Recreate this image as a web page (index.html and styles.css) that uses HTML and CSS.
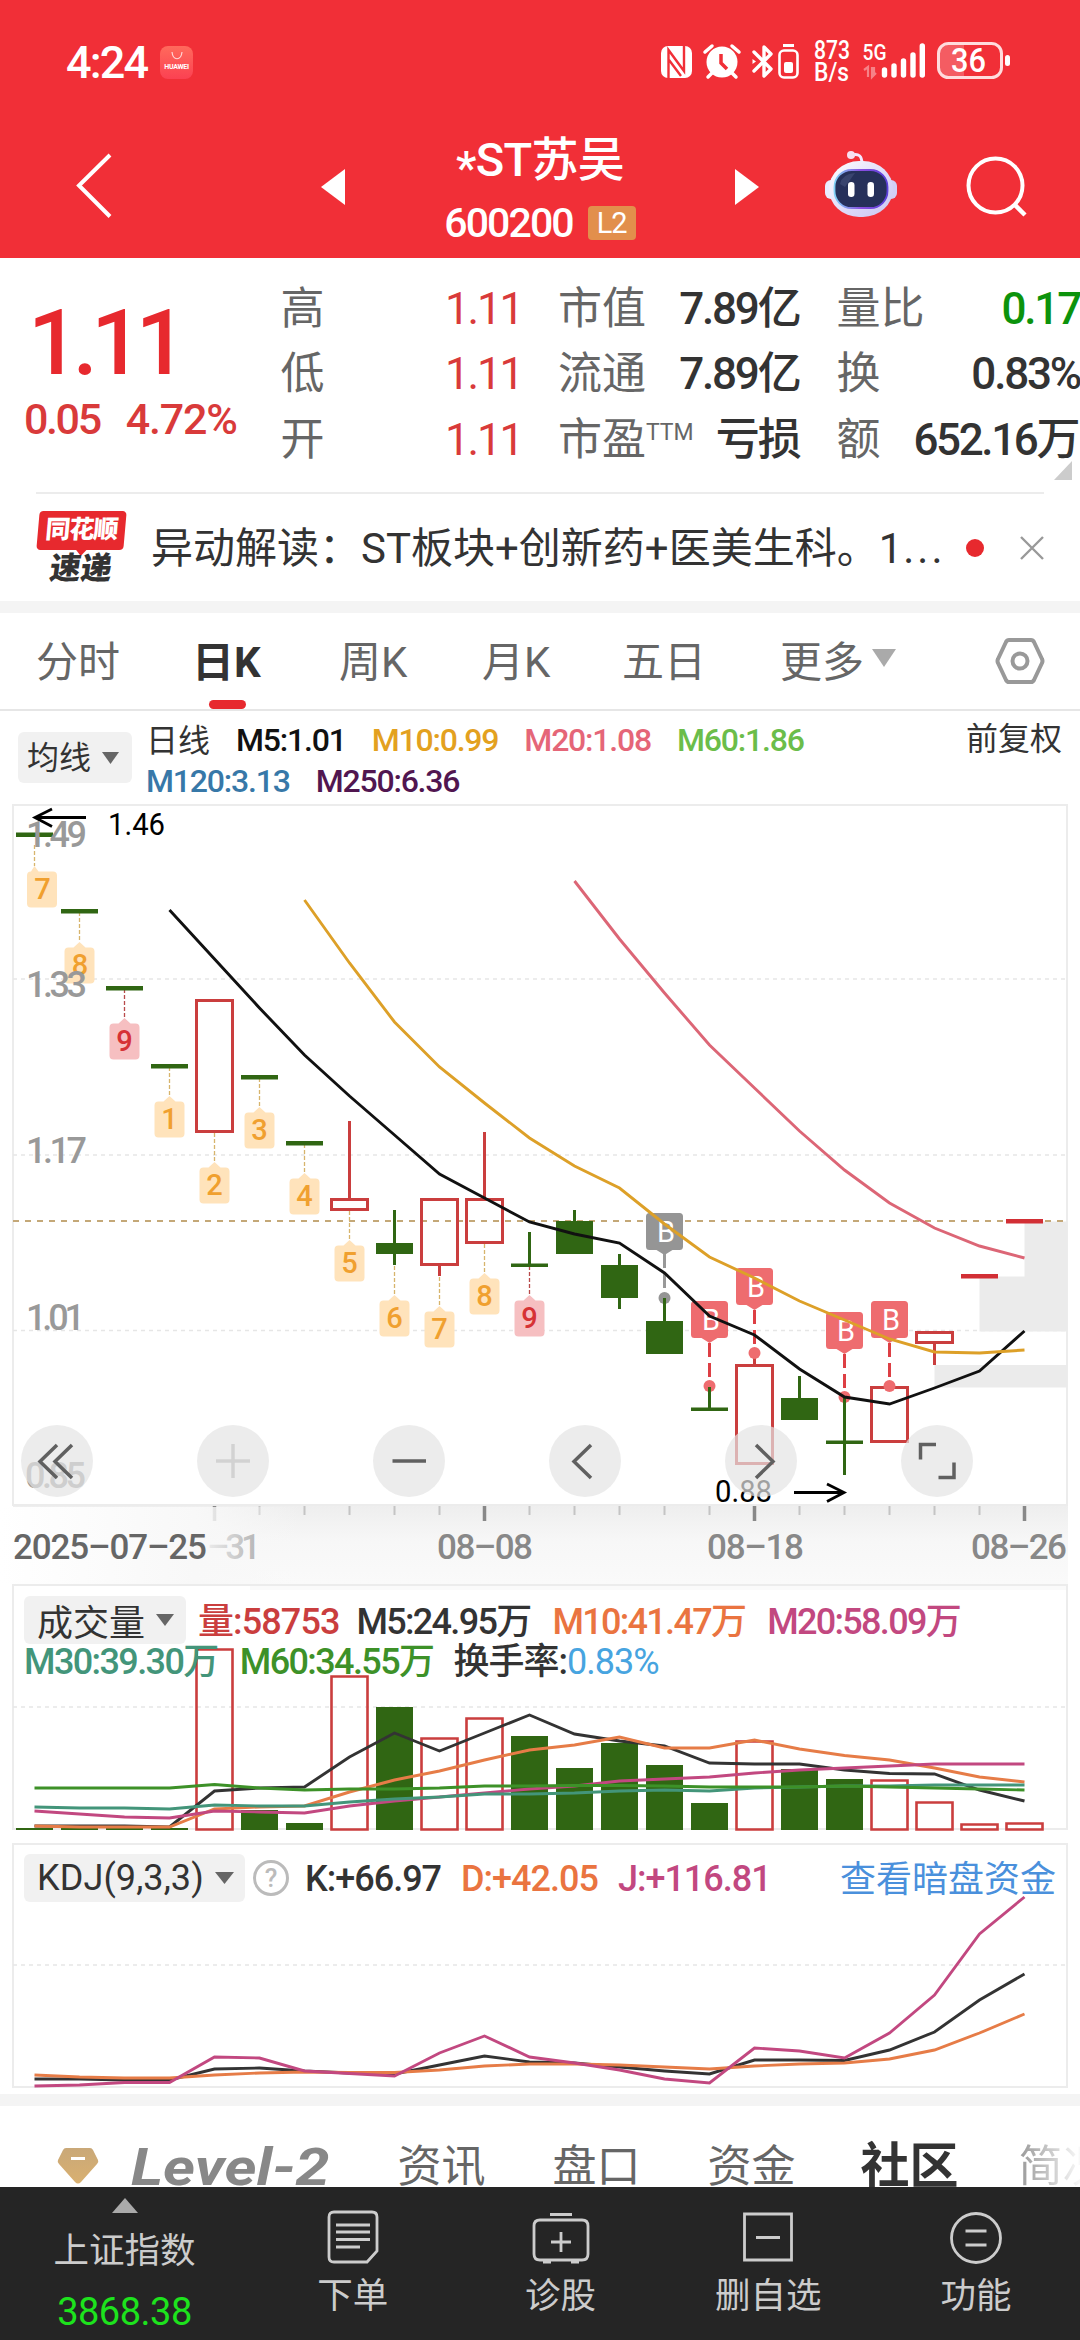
FILE: index.html
```html
<!DOCTYPE html>
<html lang="zh-CN">
<head>
<meta charset="utf-8">
<title>*ST苏吴 600200</title>
<link rel="stylesheet" href="styles.css">
</head>
<body>
<div class="page">
  <header class="top">
    <div class="status">
      <span class="clock">4:24</span>
      <span class="app-badge">
        <svg width="18" height="10" viewBox="0 0 18 10"><path d="M4 1c1 9 9 9 10 0" fill="none" stroke="#ffd5d5" stroke-width="1.2"/></svg>
        <b>HUAWEI</b>
      </span>
      <svg class="status-icons" width="350" height="44" viewBox="659 40 350 44">
        <rect x="660" y="46" width="31" height="32" rx="7" fill="#fff"/>
        <path d="M667.500 79V50l15.500 21V45M668 60l12 16" fill="none" stroke="#f12f37" stroke-width="2.400"/>
        <circle cx="721" cy="62" r="15.5" fill="#fff"/>
        <path d="M704 52l7-6M738 52l-7-6M711 73l-4 4M731 73l4 4" stroke="#fff" stroke-width="3.5" stroke-linecap="round"/>
        <path d="M720 54v9l6 6" fill="none" stroke="#f12f37" stroke-width="3.5"/>
        <path d="M753 52l17 17-7 7V47l7 7-17 17" fill="none" stroke="#fff" stroke-width="3.4" stroke-linejoin="round" stroke-linecap="round"/>
        <path d="M751.500 59l3.500 2.500-3.500 2.500z" fill="#fff"/>
        <rect x="778.5" y="50.500" width="18" height="27" rx="4.500" fill="none" stroke="#fff" stroke-width="2.6"/>
        <path d="M782 45.500h11" stroke="#fff" stroke-width="3"/><rect x="783" y="62" width="9" height="11" rx="2" fill="#fff"/>
        <text class="net" x="813" y="59" textLength="36" lengthAdjust="spacingAndGlyphs">873</text>
        <text class="net" x="813" y="81" textLength="35" lengthAdjust="spacingAndGlyphs">B/s</text>
        <text class="net five" x="861.500" y="60" textLength="24" lengthAdjust="spacingAndGlyphs">5G</text>
        <path d="M863 70l4-3v10M871 67v10l4-4M873 67v8" fill="none" stroke="#fff" stroke-opacity=".4" stroke-width="2.200"/>
        <path d="M883.500 70v5M893 66v9M902.500 61v14M912 55v20M921.300 46v29" stroke="#fff" stroke-width="5.400" stroke-linecap="round"/>
        <path d="M963 44h-15q-10 0-10 10v14q0 10 10 10h15z" fill="#fff" fill-opacity=".22"/>
        <rect x="937.500" y="43.500" width="63" height="34" rx="10" fill="none" stroke="#ffdcdd" stroke-width="3"/>
        <rect x="1004" y="55" width="5" height="11" rx="2.500" fill="#fff"/>
        <text class="pct" x="950" y="72" textLength="35" lengthAdjust="spacingAndGlyphs">36</text>
      </svg>
    </div>
    <nav class="nav">
      <svg class="back" width="38" height="66" viewBox="75 151 38 66"><path d="M110 154L79 184.500l31 31" fill="none" stroke="#fff" stroke-width="4"/></svg>
      <svg class="prev" width="24" height="36" viewBox="0 0 24 36"><path d="M24 0v36L0 18z" fill="#fff"/></svg>
      <div class="title">
        <h1><i>*</i>ST苏吴</h1>
        <p><span>600200</span><em>L2</em></p>
      </div>
      <svg class="next" width="24" height="36" viewBox="0 0 24 36"><path d="M0 0v36l24-18z" fill="#fff"/></svg>
      <svg class="robot" width="74" height="68" viewBox="824 150 74 68">
        <defs>
          <linearGradient id="shell" x1="0" y1="0" x2="1" y2="1"><stop offset="0" stop-color="#fff"/><stop offset=".6" stop-color="#dcd8f8"/><stop offset="1" stop-color="#c9c6f0"/></linearGradient>
          <linearGradient id="rim" x1="0" y1="0" x2="1" y2="0"><stop offset="0" stop-color="#7fd0f5"/><stop offset=".5" stop-color="#8a4fe0"/><stop offset="1" stop-color="#5a3fd8"/></linearGradient>
        </defs>
        <path d="M852 155q10-3 10 9" fill="none" stroke="#f4e8ff" stroke-width="3"/>
        <circle cx="851" cy="155" r="4" fill="#f8dff0"/>
        <rect x="825" y="180" width="12" height="19" rx="6" fill="#e9ecff"/><rect x="885" y="180" width="12" height="19" rx="6" fill="#d2cff5"/>
        <rect x="829" y="161" width="64" height="56" rx="30" fill="url(#shell)"/>
        <rect x="834.500" y="170" width="53" height="38" rx="17" fill="#26305a" stroke="url(#rim)" stroke-width="1.800"/>
        <path d="M840 184q2-10 15-11l-10 14z" fill="#46527c" opacity=".6"/>
        <rect x="848" y="182" width="6.500" height="15" rx="3.200" fill="#fff"/><rect x="867.500" y="182" width="6.500" height="15" rx="3.200" fill="#fff"/>
      </svg>
      <svg class="search" width="62" height="62" viewBox="964 156 62 62"><circle cx="994.500" cy="185.500" r="27" fill="none" stroke="#fff" stroke-width="4"/><path d="M1013 204l11 11" stroke="#fff" stroke-width="4.500"/></svg>
    </nav>
  </header>

  <section class="quote">
    <div class="price"><strong>1.11</strong><p><span>0.05</span><span class="pc">4.72%</span></p></div>
    <dl class="q1"><div><dt>高</dt><dd class="up">1.11</dd></div><div><dt>低</dt><dd class="up">1.11</dd></div><div><dt>开</dt><dd class="up">1.11</dd></div></dl>
    <dl class="q2"><div><dt>市值</dt><dd>7.89亿</dd></div><div><dt>流通</dt><dd>7.89亿</dd></div><div><dt>市盈<sup>TTM</sup></dt><dd>亏损</dd></div></dl>
    <dl class="q3"><div><dt>量比</dt><dd class="down">0.17</dd></div><div><dt>换</dt><dd>0.83%</dd></div><div><dt>额</dt><dd class="wan">652.16万</dd></div></dl>
    <i class="corner"></i>
  </section>

  <section class="news">
    <div class="brand"><span class="brand-top">同花顺</span><span class="brand-bottom">速递</span></div>
    <p>异动解读：ST板块+创新药+医美生科。1<span class="dots">...</span></p>
    <i class="dot"></i>
    <svg width="24" height="24" viewBox="0 0 24 24"><path d="M1 1l22 22M23 1L1 23" stroke="#999" stroke-width="2.400"/></svg>
  </section>

  <nav class="periods">
    <span>分时</span><span class="on">日K</span><span>周K</span><span>月K</span><span>五日</span>
    <span class="more">更多<svg width="24" height="18" viewBox="0 0 24 18"><path d="M0 0h24L12 18z" fill="#aaa"/></svg></span>
    <svg class="gear" width="50" height="48" viewBox="0 0 50 48"><path d="M14 3h22q2 0 3 2l8 17q1 2 0 4l-8 17q-1 2-3 2H14q-2 0-3-2L3 26q-1-2 0-4l8-17q1-2 3-2z" fill="none" stroke="#999" stroke-width="4"/><circle cx="25" cy="24" r="7.500" fill="none" stroke="#999" stroke-width="4"/></svg>
  </nav>

  <section class="ma">
    <span class="pill">均线<svg width="17" height="12" viewBox="0 0 17 12"><path d="M0 0h17L8.500 12z" fill="#666"/></svg></span>
    <div class="legend">
      <p><span class="cn">日线</span><span class="c5">M5:1.01</span><span class="c10">M10:0.99</span><span class="c20">M20:1.08</span><span class="c60">M60:1.86</span></p>
      <p><span class="c120">M120:3.13</span><span class="c250">M250:6.36</span></p>
    </div>
    <span class="adjust">前复权</span>
  </section>

  <svg class="kline" width="1080" height="780" viewBox="0 804 1080 780">
    <defs>
      <path id="flag" d="M0 0l6 5.500h5q4 0 4 4V37.500q0 4-4 4h-22q-4 0-4-4V9.500q0-4 4-4h5z"/>
      <path id="tag" d="M-15 0h30q3.500 0 3.500 3.500v30q0 3.500-3.500 3.500H8L0 42l-8-5h-7q-3.500 0-3.500-3.500v-30Q-18.500 0-15 0z"/>
      <linearGradient id="shade" x1="0" y1="0" x2="0" y2="1"><stop offset="0" stop-color="#eeeeee"/><stop offset=".45" stop-color="#f7f7f7"/><stop offset="1" stop-color="#fafafa"/></linearGradient>
      <linearGradient id="fade" x1="0" y1="0" x2="1" y2="0"><stop offset="0" stop-color="#fff"/><stop offset=".65" stop-color="#f8f8f8"/><stop offset="1" stop-color="#f8f8f8" stop-opacity="0"/></linearGradient>
    </defs>
    <rect x="13" y="1506" width="1055" height="78" fill="url(#shade)"/>
    <path class="frame" d="M13 1506V805h1054v700H13"/>
    <path class="grid" d="M13 979h1054M13 1155h1054M13 1330.500h1054"/>
    <path d="M1024.500 1221.500H1067v55h-42.500zM979.500 1276.500H1067v55h-87.500zM934.500 1365H1067v22.500H934.500z" fill="#ebebeb"/>
    <path d="M13 1221h1054" stroke="#c4a878" stroke-width="2" stroke-dasharray="6 6" fill="none"/>

    <g class="leader"><path d="M34.500 845v21M79.500 912v30M169.500 1067v29M214.500 1133v29M259.500 1078v29M304.500 1144v29M349.500 1211v29M394.500 1266v29M439.500 1277v29M484.500 1244v29"/><path class="hot" d="M124.500 989v29M529.500 1266v29"/></g>

    <path class="fall" d="M16 832.500h37v4.500H16zM61 909h37v4.500H61zM106 986h37v4.500h-37zM151 1064h37v4.500h-37zM241 1075h37v4.500h-37zM286 1141h37v4.500h-37z
      M376 1243h37v11h-37zM511 1263.500h37v3.500h-37zM556 1221h37v33h-37zM601 1265h37v33h-37zM646 1321h37v33h-37zM691 1407.500h37v3.500h-37zM781 1398h37v22h-37zM826 1440.500h37v3.500h-37z
      M393 1210h3v55h-3zM528 1232h3v33h-3zM573 1210h3v12h-3zM618 1254h3v55h-3zM798 1376h3v23h-3z"/>
    <path class="rise" d="M196.500 1000.500h36v131h-36zM331.500 1199.500h36v10h-36zM421.500 1199.500h36v65h-36zM466.500 1199.500h36v43h-36zM736.500 1365.500h36v98h-36zM871.500 1387.500h36v54h-36zM916.500 1332.500h36v10h-36z"/>
    <path class="rise" d="M349.500 1121v78M439.500 1266v10M484.500 1132v67M754.500 1354v11M934.500 1344v21"/>
    <path d="M961 1274h37v4.500h-37zM1006 1219h37v4.500h-37z" fill="#d22f35"/>

    <g class="tags grey"><use href="#tag" x="664.500" y="1213"/><path d="M664.500 1254v38" stroke="#999" stroke-width="3" stroke-dasharray="14 6"/><circle cx="664.500" cy="1298" r="6"/></g>
    <g class="tags"><use href="#tag" x="709.500" y="1301"/><use href="#tag" x="754.500" y="1268"/><use href="#tag" x="844.500" y="1312"/><use href="#tag" x="889.500" y="1301"/>
      <circle cx="709.500" cy="1386" r="6"/><circle cx="754.500" cy="1353" r="6"/><circle cx="844.500" cy="1397" r="6"/><circle cx="889.500" cy="1386" r="6"/>
      <path d="M709.500 1343v38M754.500 1310v38M844.500 1354v38M889.500 1343v38" stroke="#dd3f44" stroke-width="3" stroke-dasharray="14 6"/></g>
    <path class="fall" d="M663 1298h3v24h-3zM708 1387h3v22h-3zM843 1397h3v78h-3z"/>
    <g class="b"><text x="666" y="1242">B</text><text x="711" y="1330">B</text><text x="756" y="1297">B</text><text x="846" y="1341">B</text><text x="891" y="1330">B</text></g>

    <g class="flags">
      <use href="#flag" x="79.500" y="942"/><use href="#flag" x="169.500" y="1096"/><use href="#flag" x="214.500" y="1162"/><use href="#flag" x="259.500" y="1107"/><use href="#flag" x="304.500" y="1173"/><use href="#flag" x="349.500" y="1240"/><use href="#flag" x="394.500" y="1295"/><use href="#flag" x="439.500" y="1306"/><use href="#flag" x="484.500" y="1273"/>
      <path d="M34.500 866l4 5.500H53q4 0 4 4V903.500q0 4-4 4H31q-4 0-4-4V875.500q0-4 4-4z"/>
      <g class="num"><text x="42.500" y="899">7</text><text x="80" y="975">8</text><text x="169.500" y="1129">1</text><text x="214.500" y="1195">2</text><text x="259.500" y="1140">3</text><text x="304.500" y="1206">4</text><text x="349.500" y="1273">5</text><text x="394.500" y="1328">6</text><text x="439.500" y="1339">7</text><text x="484.500" y="1306">8</text></g>
      <g class="nine"><use href="#flag" x="124.500" y="1018"/><use href="#flag" x="529.500" y="1295"/></g>
      <g class="num nine-num"><text x="124.500" y="1051">9</text><text x="529.500" y="1328">9</text></g>
    </g>

    <polyline class="line" stroke="#111" points="169.500,910 214.500,959 259.500,1008 304.500,1055 349.500,1096 394.500,1135 439.500,1174 484.500,1198 529.500,1222 574.500,1234 619.500,1243 664.500,1273 709.500,1316 754.500,1335 799.500,1369 844.500,1397 889.500,1404 934.500,1388 979.500,1371 1024.500,1331"/>
    <polyline class="line" stroke="#dda028" points="304.500,900 349.500,963 394.500,1022 439.500,1067 484.500,1103 529.500,1138 574.500,1166 619.500,1188 664.500,1224 709.500,1257 754.500,1278 799.500,1301 844.500,1320 889.500,1339 934.500,1352 979.500,1353 1024.500,1350"/>
    <polyline class="line" stroke="#dc6676" points="574.500,881 619.500,939 664.500,993 709.500,1045 754.500,1088 799.500,1131 844.500,1170 889.500,1203 934.500,1228 979.500,1246 1024.500,1258"/>

    <path class="arrow" d="M86 817.500H36M52 809l-17 8.500 17 9M794 1492.500h50M827 1484l17 8.500-17 9"/>
    <text class="mark" x="108" y="835" textLength="57" lengthAdjust="spacingAndGlyphs">1.46</text>
    <text class="mark" x="715" y="1502" textLength="57" lengthAdjust="spacingAndGlyphs">0.88</text>
    <g class="axis">
      <text x="26" y="847" textLength="61">1.49</text><text x="26" y="997" textLength="61">1.33</text><text x="26" y="1163" textLength="61">1.17</text><text x="26" y="1330" textLength="59">1.01</text><text x="25" y="1488" textLength="61">0.85</text>
    </g>

    <path d="M259.500 1506v9M304.500 1506v9M349.500 1506v9M394.500 1506v9M439.500 1506v9M529.500 1506v9M574.500 1506v9M619.500 1506v9M664.500 1506v9M709.500 1506v9M799.500 1506v9M844.500 1506v9M889.500 1506v9M934.500 1506v9M979.500 1506v9" stroke="#c4c4c4" stroke-width="2"/>
    <path d="M214.500 1506v15M484.500 1506v15M754.500 1506v15M1024.500 1506v15" stroke="#888" stroke-width="3.500"/>
    <g class="dates">
      <text x="207" y="1559" textLength="54">–31</text><text x="437" y="1559" textLength="96">08–08</text><text x="707" y="1559" textLength="97">08–18</text><text x="971" y="1559" textLength="96">08–26</text>
      <rect x="0" y="1507" width="300" height="77" fill="url(#fade)"/>
      <text class="first" x="13" y="1559" textLength="194">2025–07–25</text>
    </g>

    <g class="controls">
      <circle cx="57" cy="1461" r="36"/><circle cx="233" cy="1461" r="36"/><circle cx="409" cy="1461" r="36"/><circle cx="585" cy="1461" r="36"/><circle cx="761" cy="1461" r="36"/><circle cx="937" cy="1461" r="36"/>
      <path d="M57 1445l-17 16.500 17 16.500M72 1445l-17 16.500 17 16.500M392.500 1461h33.500M591 1445l-17 16.500 17 16.500M756 1445l17 16.500-17 16.500M936 1444.500h-15.500v15M938.500 1477.500H954v-15"/>
      <path class="off" d="M216 1461h34M233 1444v34"/>
    </g>
  </svg>

  <section class="panel volume">
    <svg class="plot" width="1080" height="259" viewBox="0 1584 1080 259">
      <path d="M250 1584h817v6H250z" fill="#fafafa"/>
      <path class="frame" d="M13 1585h1054v244H13z"/>
      <path class="grid" d="M13 1707h1054"/>
      <path class="fall" d="M16 1828h37v2H16zM61 1828h37v2H61zM106 1828h37v2h-37zM151 1828h37v2h-37zM241 1810h37v20h-37zM286 1823h37v7h-37zM376 1707h37v123h-37zM511 1736h37v94h-37zM556 1768h37v62h-37zM601 1743h37v87h-37zM646 1765h37v65h-37zM691 1803h37v27h-37zM781 1769h37v61h-37zM826 1779h37v51h-37z"/>
      <path class="rise thin" d="M196.500 1649.500h36v180h-36zM331.500 1676.500h36v153h-36zM421.500 1738.500h36v91h-36zM466.500 1718.500h36v111h-36zM736.500 1741.500h36v88h-36zM871.500 1780.500h36v49h-36zM916.500 1802.500h36v27h-36zM961.500 1824.500h36v5h-36zM1006.500 1823.500h36v6h-36z"/>
      <polyline class="line" stroke="#333" points="34.500,1826 79.500,1826 124.500,1826 169.500,1827 214.500,1791 259.500,1788 304.500,1787 349.500,1757 394.500,1733 439.500,1751 484.500,1733 529.500,1715 574.500,1734 619.500,1741 664.500,1746 709.500,1763 754.500,1764 799.500,1764 844.500,1770 889.500,1773.500 934.500,1774 979.500,1790 1024.500,1801"/>
      <polyline class="line" stroke="#e67c47" points="34.500,1826 79.500,1827 124.500,1827 169.500,1827 214.500,1809 259.500,1807 304.500,1806 349.500,1792 394.500,1780 439.500,1771 484.500,1760 529.500,1750 574.500,1745 619.500,1737 664.500,1748 709.500,1748 754.500,1740 799.500,1749 844.500,1755.500 889.500,1760 934.500,1768 979.500,1777 1024.500,1782"/>
      <polyline class="line" stroke="#c24880" points="34.500,1811 79.500,1814 124.500,1817 169.500,1818 214.500,1811 259.500,1812 304.500,1813 349.500,1806 394.500,1801 439.500,1797 484.500,1793 529.500,1789 574.500,1786 619.500,1781 664.500,1779 709.500,1777 754.500,1773 799.500,1770 844.500,1768 889.500,1766 934.500,1764 979.500,1764 1024.500,1764"/>
      <polyline class="line" stroke="#43957a" points="34.500,1807 79.500,1808 124.500,1808 169.500,1809 214.500,1805 259.500,1806 304.500,1806 349.500,1802 394.500,1799 439.500,1797 484.500,1794 529.500,1794 574.500,1793 619.500,1791 664.500,1790 709.500,1791 754.500,1788 799.500,1787 844.500,1786 889.500,1786 934.500,1785 979.500,1785 1024.500,1785"/>
      <polyline class="line" stroke="#3d9128" points="34.500,1788 79.500,1788 124.500,1788 169.500,1788 214.500,1784.500 259.500,1788 304.500,1790 349.500,1789 394.500,1789 439.500,1788 484.500,1786 529.500,1786 574.500,1785.500 619.500,1785.500 664.500,1786 709.500,1787 754.500,1787 799.500,1787 844.500,1786 889.500,1787 934.500,1788 979.500,1789 1024.500,1790"/>
    </svg>
    <div class="row first-row">
      <span class="pill">成交量<svg width="18" height="12" viewBox="0 0 18 12"><path d="M0 0h18L9 12z" fill="#666"/></svg></span>
      <span class="v-red">量:58753</span><span class="v5">M5:24.95万</span><span class="v10">M10:41.47万</span><span class="v20">M20:58.09万</span>
    </div>
    <div class="row second-row"><span class="v30">M30:39.30万</span><span class="v60">M60:34.55万</span><span class="hs">换手率:<b>0.83%</b></span></div>
  </section>

  <section class="panel kdj">
    <svg class="plot" width="1080" height="251" viewBox="0 1843 1080 251">
      <path class="frame" d="M13 1844h1054v243H13z"/>
      <path class="grid" d="M13 1965h1054"/>
      <polyline class="line" stroke="#333" points="34.500,2079 79.500,2079 124.500,2080 169.500,2080 214.500,2069 259.500,2068 304.500,2071 349.500,2073 394.500,2074 439.500,2065 484.500,2056 529.500,2062 574.500,2063 619.500,2067 664.500,2071 709.500,2074 754.500,2060 799.500,2060 844.500,2060.500 889.500,2050 934.500,2032 979.500,2000 1024.500,1974"/>
      <polyline class="line" stroke="#e67c47" points="34.500,2075 79.500,2077 124.500,2078 169.500,2078 214.500,2075 259.500,2073 304.500,2072 349.500,2072.500 394.500,2072.500 439.500,2070 484.500,2066 529.500,2064 574.500,2064 619.500,2065 664.500,2067 709.500,2069 754.500,2066 799.500,2064 844.500,2063 889.500,2059 934.500,2050 979.500,2033 1024.500,2014"/>
      <polyline class="line" stroke="#c24880" points="34.500,2086 79.500,2085 124.500,2082.500 169.500,2082.500 214.500,2057 259.500,2058 304.500,2071 349.500,2073.500 394.500,2076 439.500,2053 484.500,2036 529.500,2057 574.500,2063 619.500,2070 664.500,2079 709.500,2083 754.500,2048 799.500,2051 844.500,2058 889.500,2033 934.500,1995 979.500,1934 1024.500,1897"/>
    </svg>
    <div class="row">
      <span class="pill">KDJ(9,3,3)<svg width="19" height="12" viewBox="0 0 19 12"><path d="M0 0h19L9.500 12z" fill="#666"/></svg></span>
      <span class="help">?</span>
      <span class="k">K:+66.97</span><span class="d">D:+42.05</span><span class="j">J:+116.81</span>
      <a>查看暗盘资金</a>
    </div>
  </section>

  <nav class="sections">
    <svg width="42" height="38" viewBox="0 0 42 38"><defs><linearGradient id="gem" x1="0" y1="0" x2="0" y2="1"><stop offset="0" stop-color="#c9a878"/><stop offset="1" stop-color="#d9b070"/></linearGradient></defs><path d="M9 1h24q2 0 3 2l5 10q1 2-1 4L24 35q-3 3-6 0L2 17q-2-2-1-4L6 3q1-2 3-2z" fill="url(#gem)"/><path d="M14 11.500h14" stroke="#fff" stroke-width="3"/></svg>
    <span class="level">Level-2</span><span>资讯</span><span>盘口</span><span>资金</span><span class="on">社区</span><span class="cut">简况</span>
  </nav>

  <footer class="bottom">
    <div class="index">
      <svg width="26" height="15" viewBox="0 0 26 15"><path d="M13 0l13 15H0z" fill="#aaa"/></svg>
      <span>上证指数</span><b>3868.38</b>
    </div>
    <div class="act"><svg width="60" height="56" viewBox="0 0 60 56"><path d="M11 3h38q5 0 5 5v34L44 53H11q-5 0-5-5V8q0-5 5-5zM13 16h34M13 23h34M13 30.500h34M13 38h24"/></svg><span>下单</span></div>
    <div class="act"><svg width="60" height="56" viewBox="0 0 60 56"><path d="M9 11h42q6 0 6 6v28q0 6-6 6H9q-6 0-6-6V17q0-6 6-6zM19 5.500h22M30 23v20M20 33h20M12 53h8M40 53h8"/></svg><span>诊股</span></div>
    <div class="act"><svg width="60" height="56" viewBox="0 0 60 56"><path d="M6.500 5h47v46h-47zM18 28.500h24"/></svg><span>删自选</span></div>
    <div class="act"><svg width="60" height="56" viewBox="0 0 60 56"><circle cx="30" cy="29" r="24.500"/><path d="M19.500 22h21M19.500 36h21"/></svg><span>功能</span></div>
  </footer>
</div>
</body>
</html>
```
FILE: styles.css
```css
* { box-sizing: border-box; margin: 0; padding: 0; }
body { width: 1080px; background: #fff; font-family: Roboto, "Noto Sans CJK SC", sans-serif; color: #333; }
i, em { font-style: normal; }
svg { display: block; flex: none; }
span, p, dt, dd, h1, b, a { white-space: nowrap; }
.page { width: 1080px; height: 2340px; overflow: hidden; display: flex; flex-direction: column; }
.page > * { flex: none; }

.top { height: 258px; background: #f12f37; color: #fff; }
.status { height: 124px; padding: 0 70px 0 66px; display: flex; align-items: center; }
.clock { font-size: 45px; font-weight: 500; letter-spacing: -1.800px; width: 94px; }
.app-badge { width: 33px; height: 33px; border-radius: 8px; background: linear-gradient(#ff6a5c, #fb4152); display: flex; flex-direction: column; align-items: center; padding-top: 5px; gap: 2px; }
.app-badge b { font-size: 7px; line-height: 8px; letter-spacing: -.3px; }
.status-icons { margin-left: auto; overflow: visible; }
.net { font-size: 25px; font-weight: 500; fill: #fff; }
.five { font-size: 22px; }
.pct { font-size: 33px; font-weight: 500; fill: #fff; }
.nav { height: 134px; display: flex; align-items: center; }
.back { margin: -13px 0 0 75px; }
.prev { margin: -8px 0 0 208px; }
.next { margin: -8px 0 0 0; }
.title { width: 390px; display: flex; flex-direction: column; align-items: center; padding-top: 1px; }
.title h1 { font-size: 47px; line-height: 62px; font-weight: 500; letter-spacing: -.7px; display: flex; height: 62px; }
.title h1 i { font-size: 46px; padding-top: 8px; }
.title p { display: flex; align-items: center; gap: 15px; height: 63px; }
.title p span { font-size: 41px; font-weight: 500; letter-spacing: -1.900px; }
.title em { width: 48px; height: 34px; border-radius: 4px; background: #e28f4c; font-size: 29px; line-height: 34px; text-align: center; letter-spacing: -1px; }
.robot { margin: -14px 0 0 65px; }
.search { margin: -9px 0 0 67px; }

.quote { height: 236px; position: relative; display: flex; padding-top: 18px; }
.quote::after { content: ""; position: absolute; left: 36px; right: 36px; bottom: 0; height: 2px; background: #ececec; }
.price { width: 281px; color: #e7292e; }
.price strong { display: block; font-size: 90px; line-height: 104px; font-weight: 500; letter-spacing: -6.500px; padding: 16px 0 0 28px; }
.price p { display: flex; gap: 26px; padding-left: 24px; font-size: 43px; line-height: 46px; font-weight: 500; letter-spacing: -2.400px; color: #d93a3a; }
.price .pc { letter-spacing: -1.200px; }
dl { display: flex; flex-direction: column; }
dl > div { height: 65.500px; display: flex; justify-content: space-between; align-items: center; }
dt { font-size: 44px; color: #666; line-height: 60px; }
dd { font-size: 44px; font-weight: 500; letter-spacing: -2.200px; line-height: 60px; }
sup { font-size: 23px; vertical-align: 15px; line-height: 1px; }
.q1 { width: 242px; margin-right: 36px; }
.q2 { width: 242px; margin-right: 37px; }
.q3 { width: 244px; }
.wan { padding-right: 2px; letter-spacing: -2.400px; }
.up { color: #d93a3a; font-weight: 400; }
.down { color: #0c930c; }
.corner { position: absolute; right: 8px; bottom: 14px; border: solid transparent; border-width: 0 0 19px 18px; border-bottom-color: #ccc; }

.news { height: 107px; display: flex; align-items: center; padding: 0 36px 0 37px; }
.brand { width: 88px; display: flex; flex-direction: column; align-items: center; font-weight: 900; }
.brand-top { width: 87px; height: 39px; background: #e7292e; border-radius: 4px; transform: skewX(-5deg); color: #fff; font-size: 25px; line-height: 37px; text-align: center; position: relative; letter-spacing: -1px; }
.brand-top::after { content: ""; position: absolute; left: 39px; top: 38px; border: solid transparent; border-width: 7px 6px 0; border-top-color: #e7292e; }
.brand-bottom { font-size: 31px; line-height: 32px; transform: skewX(-8deg); margin-top: 3px; }
.news p { margin: -6px 0 0 26px; width: 807px; font-size: 42px; letter-spacing: 0; }
.dots { letter-spacing: 3px; margin-left: 1px; }
.dot { width: 18px; height: 18px; border-radius: 50%; background: #e7292e; margin: 0 auto 0 8px; }

.periods { border-top: 12px solid #f4f4f4; border-bottom: 2px solid #e6e6e6; height: 110px; display: flex; align-items: center; padding: 0 35px 0 36px; font-size: 42px; color: #666; }
.periods span { width: 143px; margin-top: -6px; }
.periods span:first-child { width: 156px; }
.periods .on { width: 147px; color: #333; font-weight: 700; position: relative; }
.periods .on::after { content: ""; position: absolute; left: 17px; bottom: -20px; width: 37px; height: 9px; border-radius: 5px; background: #e7292e; }
.periods span:nth-child(4) { width: 140px; }
.periods span:nth-child(5) { width: 158px; }
.periods .more { display: flex; align-items: center; gap: 8px; }
.gear { margin-left: auto; }

.ma { height: 93px; display: flex; padding: 0 18px; font-size: 32px; }
.pill { background: #f1f1f1; border-radius: 6px; display: flex; align-items: center; }
.ma .pill { width: 114px; height: 51px; margin-top: 21px; padding-left: 9px; gap: 11px; line-height: 44px; }
.legend { padding: 8px 0 0 14px; font-weight: 500; letter-spacing: -1.200px; flex: 1; }
.legend p { display: flex; height: 41px; align-items: center; gap: 26px; }
.legend .cn { font-weight: 400; letter-spacing: 0; margin-top: -3px; }
.c5 { color: #111; } .c10 { color: #e3a11f; } .c20 { color: #e56678; } .c60 { color: #6bbd4a; } .c120 { color: #3778a8; } .c250 { color: #511650; }
.adjust { padding-top: 4px; line-height: 48px; }

.kline { overflow: hidden; }
.frame { fill: none; stroke: #ececec; stroke-width: 2; }
.grid { fill: none; stroke: #e6e6e6; stroke-width: 1.500; stroke-dasharray: 4 4; }
.fall { fill: #306613; }
.rise { fill: none; stroke: #ca3e3e; stroke-width: 3; }
.thin { stroke-width: 2.600; }
.line { fill: none; stroke-width: 2.900; }
.leader path { fill: none; stroke: #d7b46c; stroke-width: 1.300; stroke-dasharray: 4 2; }
.leader .hot { stroke: #b84a4a; }
.flags { fill: #ffe3bb; }
.nine { fill: #f6bfc1; }
.num { font-size: 29px; font-weight: 500; fill: #f0a02f; text-anchor: middle; }
.nine-num { fill: #d63235; }
.tags { fill: #ee6c6f; }
.grey { fill: #959595; }
.b { fill: #fff; font-size: 29px; text-anchor: middle; }
.arrow { fill: none; stroke: #000; stroke-width: 2.800; }
.mark { font-size: 31px; fill: #000; }
.axis { font-size: 36px; font-weight: 500; fill: #999; }
.dates { font-size: 35px; font-weight: 500; fill: #888; }
.dates .first { fill: #666; }
.controls circle { fill: #e4e4e4; fill-opacity: .7; }
.controls path { fill: none; stroke: #606060; stroke-width: 3.500; }
.controls .off { stroke: #d2d2d2; }

.panel { position: relative; font-size: 36px; }
.plot { position: absolute; left: 0; top: 0; }
.volume { height: 259px; padding: 12px 24px 0; }
.kdj { height: 251px; padding: 11px 24px 0; }
.row { position: relative; display: flex; align-items: center; height: 48px; font-weight: 500; letter-spacing: -1.600px; gap: 22px; }
.first-row > span:not(.pill) { margin-top: -5px; }
.second-row { height: 31px; gap: 22px; margin-top: -2px; }
.row .pill { height: 48px; font-weight: 400; letter-spacing: 0; gap: 11px; padding-left: 13px; }
.first-row .pill { width: 162px; margin-right: -10px; padding-bottom: 1px; }
.first-row .v5, .first-row .v10, .first-row .v20 { letter-spacing: -1.700px; }
.kdj .pill { width: 221px; letter-spacing: .1px; }
.v-red { color: #ca3e3e; letter-spacing: -.900px; margin-right: -5px; } .v10, .d { color: #ea7440; } .v20, .j { color: #c24880; } .v30 { color: #43957a; } .v60 { color: #3d9128; }
.hs { letter-spacing: -1px; margin-left: -2px; }
.hs b { font-weight: 400; color: #47a4e0; }
.help { width: 36px; height: 36px; border: 3px solid #bbb; border-radius: 50%; color: #bbb; font-size: 26px; line-height: 30px; text-align: center; margin: 0 -6px 0 -14px; letter-spacing: 0; }
.k, .d, .j { letter-spacing: -1px; margin-right: -2px; padding-top: 2px; }
.kdj .row a { margin-left: auto; color: #4a90dc; font-weight: 400; letter-spacing: 0; margin-top: -5px; }

.sections { border-top: 12px solid #f4f4f4; height: 93px; padding: 0 0 0 57px; display: flex; font-size: 44px; color: #666; overflow: hidden; }
.sections span { line-height: 60px; margin: 31px 67px 0 0; }
.sections svg { margin-top: 41px; }
.sections .level { width: 170px; font-size: 51px; font-weight: 700; font-style: italic; color: #888; margin: 32px 101px 0 32px; transform: scaleX(1.2); transform-origin: 0 50%; }
.sections .on { font-size: 49px; font-weight: 700; color: #333; margin-right: 60px; margin-left: -2px; }
.sections .cut { background: linear-gradient(90deg, #999, #fff 65px); background-clip: text; color: transparent; margin-right: 0; }

.bottom { height: 153px; background: #252525; display: flex; color: #ccc; font-size: 35.500px; }
.index { width: 249px; display: flex; flex-direction: column; align-items: center; padding-top: 11px; }
.index span { line-height: 50px; margin-top: 13px; }
.index b { font-weight: 400; font-size: 38px; line-height: 50px; margin-top: 11px; color: #1de31d; letter-spacing: -.5px; }
.act { width: 207.700px; display: flex; flex-direction: column; align-items: center; padding-top: 22px; }
.act svg { fill: none; stroke: #ccc; stroke-width: 2.800; }
.act span { line-height: 50px; margin-top: 6px; }
```
